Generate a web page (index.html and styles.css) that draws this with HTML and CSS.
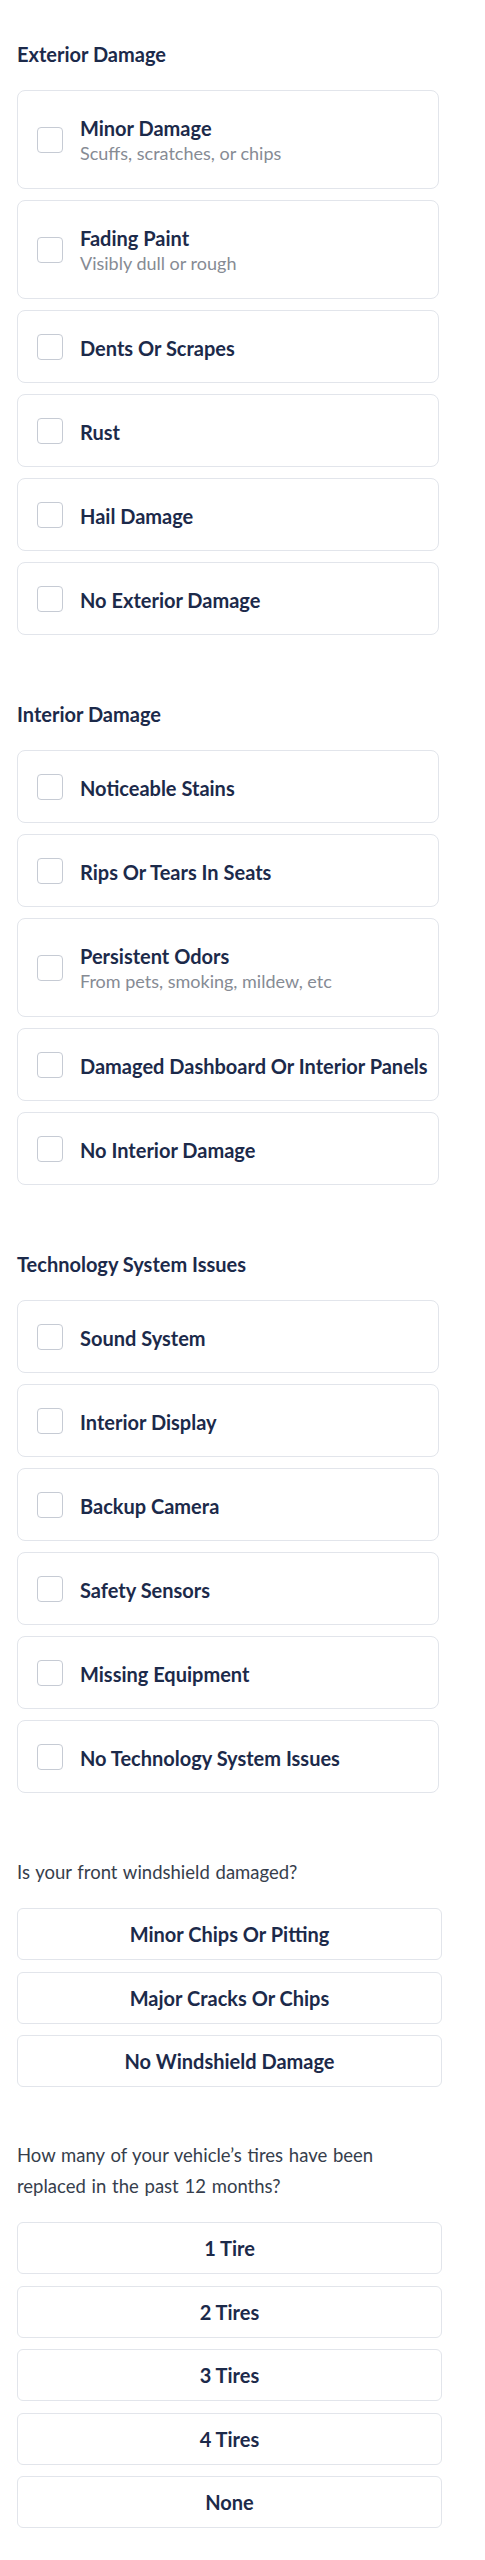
FILE: index.html
```html
<!DOCTYPE html>
<html lang="en">
<head>
<meta charset="utf-8">
<title>Vehicle Condition</title>
<link rel="stylesheet" href="styles.css">
</head>
<body>
<main class="page">
  <section class="section">
    <h2 class="heading">Exterior Damage</h2>
    <div class="cards">
      <label class="card"><span class="box"></span><span class="text"><span class="title">Minor Damage</span><span class="sub">Scuffs, scratches, or chips</span></span></label>
      <label class="card"><span class="box"></span><span class="text"><span class="title">Fading Paint</span><span class="sub">Visibly dull or rough</span></span></label>
      <label class="card"><span class="box"></span><span class="text"><span class="title">Dents Or Scrapes</span></span></label>
      <label class="card"><span class="box"></span><span class="text"><span class="title">Rust</span></span></label>
      <label class="card"><span class="box"></span><span class="text"><span class="title">Hail Damage</span></span></label>
      <label class="card"><span class="box"></span><span class="text"><span class="title">No Exterior Damage</span></span></label>
    </div>
  </section>

  <section class="section">
    <h2 class="heading">Interior Damage</h2>
    <div class="cards">
      <label class="card"><span class="box"></span><span class="text"><span class="title">Noticeable Stains</span></span></label>
      <label class="card"><span class="box"></span><span class="text"><span class="title">Rips Or Tears In Seats</span></span></label>
      <label class="card"><span class="box"></span><span class="text"><span class="title">Persistent Odors</span><span class="sub">From pets, smoking, mildew, etc</span></span></label>
      <label class="card"><span class="box"></span><span class="text"><span class="title">Damaged Dashboard Or Interior Panels</span></span></label>
      <label class="card"><span class="box"></span><span class="text"><span class="title">No Interior Damage</span></span></label>
    </div>
  </section>

  <section class="section">
    <h2 class="heading">Technology System Issues</h2>
    <div class="cards">
      <label class="card"><span class="box"></span><span class="text"><span class="title">Sound System</span></span></label>
      <label class="card"><span class="box"></span><span class="text"><span class="title">Interior Display</span></span></label>
      <label class="card"><span class="box"></span><span class="text"><span class="title">Backup Camera</span></span></label>
      <label class="card"><span class="box"></span><span class="text"><span class="title">Safety Sensors</span></span></label>
      <label class="card"><span class="box"></span><span class="text"><span class="title">Missing Equipment</span></span></label>
      <label class="card"><span class="box"></span><span class="text"><span class="title">No Technology System Issues</span></span></label>
    </div>
  </section>

  <section class="section section-q1">
    <p class="question">Is your front windshield damaged?</p>
    <div class="options">
      <button class="option">Minor Chips Or Pitting</button>
      <button class="option">Major Cracks Or Chips</button>
      <button class="option">No Windshield Damage</button>
    </div>
  </section>

  <section class="section section-q2">
    <p class="question question-narrow">How many of your vehicle’s tires have been replaced in the past 12 months?</p>
    <div class="options">
      <button class="option">1 Tire</button>
      <button class="option">2 Tires</button>
      <button class="option">3 Tires</button>
      <button class="option">4 Tires</button>
      <button class="option">None</button>
    </div>
  </section>
</main>
</body>
</html>
```

FILE: styles.css
```css
* {
  box-sizing: border-box;
}

html, body {
  margin: 0;
  padding: 0;
  background: #ffffff;
}

body {
  font-family: Lato, "Noto Sans", "Liberation Sans", sans-serif;
  color: #1c2a4a;
}

.page {
  padding: 42px 43px 40px 17px;
}

.section + .section {
  margin-top: 67px;
}

.section-q1 {
  margin-top: 64px !important;
}

.section-q2 {
  margin-top: 53px !important;
}

.heading {
  margin: 0 0 24px;
  font-size: 20px;
  line-height: 24px;
  font-weight: 700;
  color: #1c2a4a;
}

.cards {
  display: flex;
  flex-direction: column;
  gap: 11px;
  width: 422px;
}

.card {
  display: flex;
  align-items: center;
  gap: 17px;
  padding: 25px 6px 22px 19px;
  border: 1px solid #e2e5eb;
  border-radius: 8px;
  background: #fff;
}

.box {
  flex: none;
  width: 26px;
  height: 26px;
  border: 1.5px solid #c6cbd4;
  border-radius: 4px;
  margin-top: -2px;
}

.text {
  display: flex;
  flex-direction: column;
  min-width: 0;
}

.title {
  font-size: 20px;
  line-height: 24px;
  font-weight: 700;
  color: #1c2a4a;
  white-space: nowrap;
}

.sub {
  font-size: 18px;
  line-height: 26px;
  font-weight: 400;
  color: #868b94;
}

.question {
  margin: 0 0 20px;
  font-size: 18.5px;
  line-height: 31px;
  font-weight: 400;
  word-spacing: 1px;
  color: #363e4c;
  width: 425px;
}

.question-narrow {
  width: 400px;
}

.options {
  display: flex;
  flex-direction: column;
  gap: 11.5px;
  width: 425px;
}

.option {
  display: block;
  width: 100%;
  height: 52px;
  padding: 0 12px;
  border: 1px solid #e2e5eb;
  border-radius: 6px;
  background: #fff;
  font-family: inherit;
  font-size: 20px;
  font-weight: 700;
  color: #1c2a4a;
  text-align: center;
}
```
